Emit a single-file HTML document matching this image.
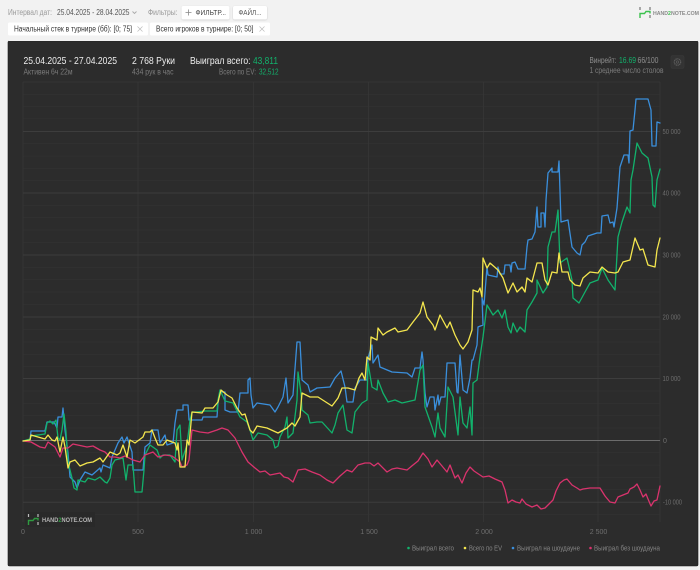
<!DOCTYPE html>
<html><head><meta charset="utf-8"><style>
html,body{margin:0;padding:0;background:#f2f2f2;width:700px;height:570px;overflow:hidden}
svg{display:block;font-family:"Liberation Sans",sans-serif;filter:blur(.3px)}
.l{fill:none;stroke-width:1.3;stroke-linejoin:round;stroke-linecap:round}
</style></head><body>
<svg width="700" height="570" viewBox="0 0 700 570" xmlns="http://www.w3.org/2000/svg">
<defs><filter id="s" x="-10%" y="-20%" width="120%" height="150%"><feDropShadow dx="0" dy="0.5" stdDeviation="0.8" flood-opacity=".18"/></filter></defs>

<g font-size="8">
<text x="8" y="15" fill="#999" textLength="44" lengthAdjust="spacingAndGlyphs">Интервал дат:</text>
<text x="57" y="15" fill="#555" textLength="72.5" lengthAdjust="spacingAndGlyphs">25.04.2025 - 28.04.2025</text>
<path d="M132.5 11.5l2 2 2-2" fill="none" stroke="#aaa" stroke-width=".9"/>
<text x="148" y="15" fill="#999" textLength="29.5" lengthAdjust="spacingAndGlyphs">Фильтры:</text>
<rect x="181.5" y="6" width="48" height="13.5" rx="2" fill="#fff" filter="url(#s)"/>
<path d="M188.5 9.5v6M185.5 12.5h6" stroke="#888" stroke-width=".8"/>
<text x="195.5" y="15" fill="#444" font-size="7.5" textLength="30.5" lengthAdjust="spacingAndGlyphs">ФИЛЬТР...</text>
<rect x="233" y="6" width="34" height="13.5" rx="2" fill="#fff" filter="url(#s)"/>
<text x="238.5" y="15" fill="#555" font-size="7.5" textLength="23" lengthAdjust="spacingAndGlyphs">ФАЙЛ...</text>

<rect x="8" y="22.5" width="140" height="13" rx="1.5" fill="#fff"/>
<text x="14" y="31.5" fill="#333" textLength="118" lengthAdjust="spacingAndGlyphs">Начальный стек в турнире (бб): [0; 75]</text>
<path d="M137.5 26.5l5 5M142.5 26.5l-5 5" stroke="#bbb" stroke-width=".7"/>
<rect x="150" y="22.5" width="120" height="13" rx="1.5" fill="#fff"/>
<text x="156" y="31.5" fill="#333" textLength="97.5" lengthAdjust="spacingAndGlyphs">Всего игроков в турнире: [0; 50]</text>
<path d="M259.5 26.5l5 5M264.5 26.5l-5 5" stroke="#bbb" stroke-width=".7"/>
</g>

<!-- top logo -->
<path d="M640 7v3M650 7v3M650 15v3" stroke="#777" stroke-width="1.2" fill="none"/>
<path d="M640 18v-4.5h4.5l1.5-2h4v2" stroke="#3cc24e" stroke-width="1.4" fill="none"/>
<text x="653" y="15" font-size="5.5" font-weight="bold" fill="#8a8a8a" textLength="46" lengthAdjust="spacingAndGlyphs">HAND<tspan fill="#3cc24e">2</tspan>NOTE.COM</text>

<!-- card -->
<rect x="8" y="41" width="690" height="525" rx="1.5" fill="#2c2c2c" stroke="#1d1d1d" stroke-width=".6"/>
<path d="M9 40.7H697" stroke="#fff" stroke-width=".5"/>

<!-- minor grid -->
<g stroke="#353535" stroke-width=".5">
<path d="M23 94.3H660M23 106.6H660M23 118.9H660M23 143.8H660M23 156.1H660M23 168.4H660M23 180.7H660M23 205.4H660M23 217.7H660M23 230H660M23 242.3H660M23 267.4H660M23 279.7H660M23 292H660M23 304.3H660M23 329.7H660M23 342H660M23 354.3H660M23 366.6H660M23 391H660M23 403.3H660M23 415.6H660M23 428H660M23 452.8H660M23 465.1H660M23 477.4H660M23 489.7H660M23 514.6H660"/>
</g>
<g stroke="#383838" stroke-width=".7">
<path d="M23 82V522M138 82V522M253.5 82V522M368.5 82V522M483.5 82V522M598 82V522M660 82V522M23 82H660"/>
</g>
<g stroke="#3d3d3d" stroke-width="1">
<path d="M23 131.5H660M23 193H660M23 255H660M23 317H660M23 378.5H660M23 502.3H660"/>
</g>
<path d="M23 440.5H660" stroke="#6c6c6c" stroke-width="1"/>

<!-- blue -->
<path class="l" stroke="#3a8fdc" d="M23 441L30 440L31 431H45L47 422H54L57 428L58 417H62L63 408L65 430L68 453L70 477L75 482L77 488L80 480L85 472L92 475L100 468L101 472L103 465L110 468L112 457L118 443L122 437L124 443L127 437L132 452L133 470H143L145 447L150 443L152 430H158L160 443L165 435L167 445L173 443L175 423L177 410H183V405H188L189 420H202L203 417H217L218 403L220 392H225V410L230 412H238L240 393H248V380L250 378L251 395L253 408L257 403L270 405L275 412L278 407L283 397L286 378L288 403L293 395L297 342H300L302 380L308 385L310 392L317 388L330 387L335 378L341 371L345 387L347 402H353L355 388L360 380H367L368 358L372 345L373 363L378 355L380 367L392 372L407 373L412 377L415 368H420L422 352L423 360L425 393L427 407L430 397H434L435 410L438 395L439 405L441 397H445L447 363H455L457 392L458 393L460 355L463 390L467 393L470 378L472 360L473 360L477 345L478 327L483 325L482 298L484 305L487 267L488 275L497 277L498 267L500 274H504L505 265H510L511 272L512 263L515 262L518 269H525L527 247L528 240L532 239L535 232L537 207L538 227H541V213L544 213L545 227L546 200L548 173L552 168V172H558L559 161L561 222L568 220L572 247L577 253L580 255L582 245L585 242L588 236L597 233H601L602 216L608 215L610 223L613 222L614 227L617 208L620 167L624 155H628L629 163L630 131L633 130L635 110L636 99H648L651 110L652 146H656L657 122L660 123"/>
<!-- green -->
<path class="l" stroke="#12b26c" d="M23 441L30 439L31 436L45 434L47 423L50 421L53 424L56 420L58 438L60 440L62 430L64 414L66 432L68 462L72 478L74 488L77 490L78 480L85 482L88 478L95 480L100 477L105 482L107 483L110 478L112 465L115 460L123 458L126 480L128 465L133 465L135 492H142L144 470L145 455L150 445L157 450L160 458L163 455L170 455L175 462L177 430L180 425L182 460L187 445L190 420L192 412H197L205 411L217 411L218 400L220 390L225 401L233 403L240 417L247 422L250 430L253 440L258 433L267 435L273 440L275 448L278 446L280 437L285 427L287 417L288 438L293 433L297 400L298 372L301 393L302 410L308 415L310 423L317 422L322 422L332 433L335 425L338 413L343 405L347 430L352 433L355 412L362 403L367 400L368 363L372 387L377 390L378 380L383 393L388 402L395 400L402 403L415 400L420 370L423 365L425 407L432 427L435 437L438 413L440 428L445 437L448 387L453 397L458 435L460 397L463 423L467 428L470 407L472 435L473 383L477 380L480 357L483 337L487 305L493 315L498 310L502 318L505 310L508 327L511 333L513 323L517 332L520 327L525 332L527 310L532 302L537 293V280L543 293L547 287L548 247L552 232L555 232L558 210L560 263L567 258L572 280L573 298L579 303L585 292L590 283L598 280L602 268L608 280L615 290L618 237L622 222L627 207L630 213L631 180L633 170L637 143L642 153L648 158L652 177L653 205L655 207L657 180L660 169"/>
<!-- pink -->
<path class="l" stroke="#d9336d" d="M23 441L31 442L40 447L45 448L48 442L55 447L60 457L63 448L68 448L73 444L87 447L93 446L100 450L105 452L110 457L115 457L120 458L125 456L133 460L140 462L145 455L153 452L158 457L165 455L172 456L180 462L182 467L187 465L189 460L192 430L200 432L208 433L217 430L222 428L228 430L235 438L242 452L248 462L255 468L260 472L265 471L270 475L275 474L280 473L284 477L288 478L293 482L298 470L305 469L312 472L320 475L327 480L333 483L340 476L347 470L352 472L358 465L365 463L370 463L374 466L378 463L387 472L392 469L397 468L407 470L413 465L418 461L423 453L428 459L432 467L437 460L442 466L447 472L450 465L455 478L458 475L462 483L466 473L470 467L474 471L480 475L483 477L489 476L495 479L502 482L505 490L508 503L512 500L516 502L520 503L522 499L526 504L532 507L537 505L541 509L545 508L549 504L553 500L556 491L560 483L564 480L567 479L572 485L577 488L580 490L583 489L590 488L595 488L600 488L605 496L610 502L615 503L618 497L623 495L628 493L630 489L634 487L637 484L640 490L643 497L646 494L648 499L651 506L654 501L657 500L660 486"/>
<!-- yellow -->
<path class="l" stroke="#f4e64e" d="M23 441L30 440L31 435L45 439L48 435L52 440L55 441L57 437L60 452L63 437L65 447L68 468L70 462L75 460L80 466L87 463L93 462L100 458L103 462L110 452L117 455L120 453L123 445L127 457L130 440L135 443L143 437L145 432H150L152 430L155 438L158 445H163L167 440L172 442L175 443L177 450L178 443L180 467H185L187 440L189 445L192 412L202 413L205 408H213L218 402L221 390L227 395L232 398L237 408L242 415L245 414L250 430L253 433L257 426L267 428L278 433L287 428L292 423L295 426L300 417L302 393L310 397H318L332 406L338 398L342 388H348L355 390L359 378L362 373L365 380L367 357L370 360L371 337L377 340L378 328L383 335L387 332L395 328L398 332L407 330L413 322L420 313L423 302L427 317L433 325L435 330L440 315L447 328L450 322L455 335L460 345L463 349L468 342L472 330L473 290L478 292L480 288L482 297L483 258L487 268L490 263L498 270L503 278L508 293L513 283L517 292L522 287L525 292L527 278L532 282L537 263H542L545 280L548 285L552 272L557 273L559 253L562 272H568L570 280L575 285L580 286L583 278L590 272L598 273L602 267L608 272L615 273L618 272L623 262L630 260L635 238L640 250L643 249L648 265L655 267L657 250L660 238"/>

<!-- header -->
<g fill="#eee" font-size="10.5">
<text x="23.5" y="64" textLength="93.5" lengthAdjust="spacingAndGlyphs">25.04.2025 - 27.04.2025</text>
<text x="132" y="64" textLength="43" lengthAdjust="spacingAndGlyphs">2 768 Руки</text>
<text x="190" y="64" textLength="60.5" lengthAdjust="spacingAndGlyphs">Выиграл всего:</text>
<text x="253" y="64" fill="#12b26c" textLength="25" lengthAdjust="spacingAndGlyphs">43,811</text>
</g>
<g fill="#7c7c7c" font-size="8">
<text x="23.5" y="74.5" textLength="49" lengthAdjust="spacingAndGlyphs">Активен 6ч 22м</text>
<text x="132" y="74.5" textLength="41.5" lengthAdjust="spacingAndGlyphs">434 рук в час</text>
<text x="219" y="74.5" textLength="37" lengthAdjust="spacingAndGlyphs">Всего по EV:</text>
<text x="259" y="74.5" fill="#12b26c" textLength="19.5" lengthAdjust="spacingAndGlyphs">32,512</text>
<text x="589.5" y="63" fill="#8f8f8f" textLength="27" lengthAdjust="spacingAndGlyphs">Винрейт:</text>
<text x="619" y="63" fill="#12b26c" textLength="17" lengthAdjust="spacingAndGlyphs">16.69</text>
<text x="637.5" y="63" fill="#8f8f8f" textLength="21" lengthAdjust="spacingAndGlyphs">66/100</text>
<text x="589.5" y="73" textLength="74" lengthAdjust="spacingAndGlyphs">1 среднее число столов</text>
</g>
<rect x="671" y="55.5" width="13" height="13" rx="1.5" fill="#333" stroke="#3a3a3a" stroke-width=".5"/>
<circle cx="677.5" cy="62" r="3.2" fill="none" stroke="#5c5c5c" stroke-width="1.2" stroke-dasharray="1.3 .5"/>
<circle cx="677.5" cy="62" r="1.2" fill="none" stroke="#5c5c5c" stroke-width=".7"/>

<!-- axes -->
<g fill="#6e6e6e" font-size="7">
<text x="662.5" y="134" textLength="18" lengthAdjust="spacingAndGlyphs">50 000</text>
<text x="662.5" y="195.5" textLength="18" lengthAdjust="spacingAndGlyphs">40 000</text>
<text x="662.5" y="257.5" textLength="18" lengthAdjust="spacingAndGlyphs">30 000</text>
<text x="662.5" y="319.5" textLength="18" lengthAdjust="spacingAndGlyphs">20 000</text>
<text x="662.5" y="381" textLength="18" lengthAdjust="spacingAndGlyphs">10 000</text>
<text x="663" y="443">0</text>
<text x="663" y="504.5" textLength="19" lengthAdjust="spacingAndGlyphs">-10 000</text>
<g text-anchor="middle">
<text x="23" y="534">0</text>
<text x="138" y="534">500</text>
<text x="253.5" y="534">1 000</text>
<text x="369" y="534">1 500</text>
<text x="484" y="534">2 000</text>
<text x="598.5" y="534">2 500</text>
</g>
</g>

<!-- watermark -->
<rect x="25" y="512" width="70" height="15" fill="#292929"/>
<path d="M28.5 514v3M38 514v3M38 522v3" stroke="#bbb" stroke-width="1.2" fill="none"/>
<path d="M28.5 525v-4.5h4.5l1.5-2h3.5v2" stroke="#2f9a40" stroke-width="1.4" fill="none"/>
<text x="42" y="522" font-size="6.5" font-weight="bold" fill="#b5b5b5" textLength="50" lengthAdjust="spacingAndGlyphs">HAND<tspan fill="#2f9a40">2</tspan>NOTE.COM</text>

<!-- legend -->
<g fill="#858585" font-size="7.5">
<circle cx="408.5" cy="548" r="1.3" fill="#12b26c"/>
<text x="412" y="550.5" textLength="42" lengthAdjust="spacingAndGlyphs">Выиграл всего</text>
<circle cx="465" cy="548" r="1.3" fill="#f4e64e"/>
<text x="469" y="550.5" textLength="33" lengthAdjust="spacingAndGlyphs">Всего по EV</text>
<circle cx="513" cy="548" r="1.3" fill="#3a8fdc"/>
<text x="517" y="550.5" textLength="63" lengthAdjust="spacingAndGlyphs">Выиграл на шоудауне</text>
<circle cx="590.5" cy="548" r="1.3" fill="#d9336d"/>
<text x="594" y="550.5" textLength="66" lengthAdjust="spacingAndGlyphs">Выиграл без шоудауна</text>
</g>
</svg>
</body></html>
